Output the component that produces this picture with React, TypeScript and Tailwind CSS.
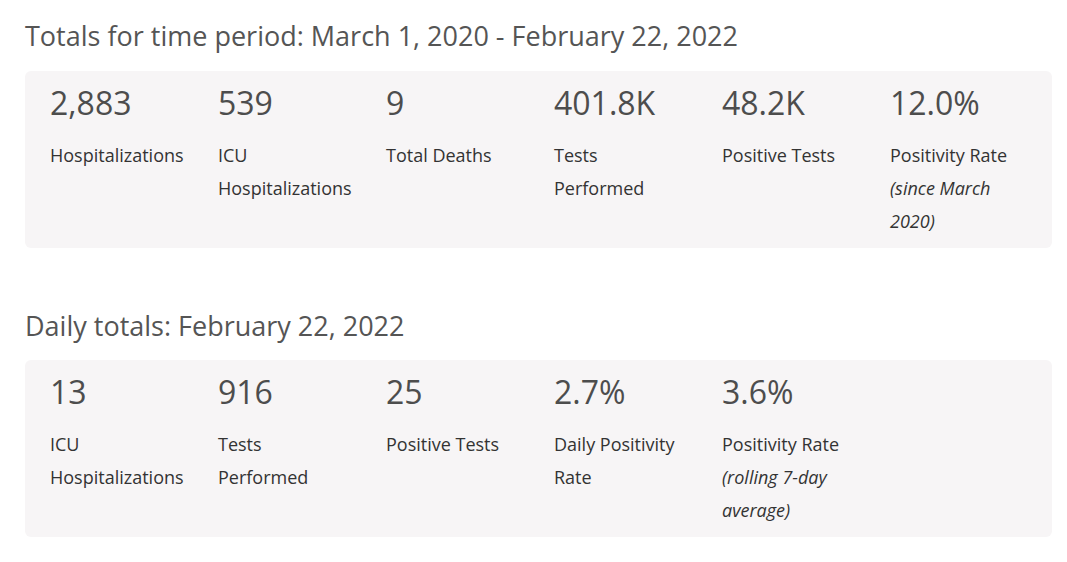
const totals = [
  { value: "2,883", label: "Hospitalizations" },
  { value: "539", label: "ICU Hospitalizations" },
  { value: "9", label: "Total Deaths" },
  { value: "401.8K", label: "Tests Performed" },
  { value: "48.2K", label: "Positive Tests" },
  { value: "12.0%", label: "Positivity Rate", note: "(since March 2020)" },
]

const daily = [
  { value: "13", label: "ICU Hospitalizations" },
  { value: "916", label: "Tests Performed" },
  { value: "25", label: "Positive Tests" },
  { value: "2.7%", label: "Daily Positivity Rate" },
  { value: "3.6%", label: "Positivity Rate", note: "(rolling 7-day average)" },
]

type Stat = { value: string; label: string; note?: string }

function StatCard({ stats }: { stats: Stat[] }) {
  return (
    <div className="bg-[#f7f5f6] rounded-md pl-[25px] pt-[12px] pb-[10px] flex">
      {stats.map((s) => (
        <div key={s.label + s.value} className="w-[168px] shrink-0 pr-[33px]">
          <div className="text-[32px] leading-[40px] text-[#4d4d4d]">{s.value}</div>
          <div className="mt-[16px] text-[18px] leading-[33px] text-[#333]">
            {s.label}
            {s.note && <i className="block">{s.note}</i>}
          </div>
        </div>
      ))}
    </div>
  )
}

export default function App() {
  return (
    <main
      className="min-h-screen bg-white pl-[25px] pr-[15px] pt-[18px]"
      style={{ fontFamily: '"Open Sans", sans-serif' }}
    >
      <h2 className="text-[27px] leading-[36px] text-[#555] mb-[17px]">
        Totals for time period: March 1, 2020 - February 22, 2022
      </h2>
      <StatCard stats={totals} />

      <h2 className="text-[27px] leading-[36px] text-[#555] mt-[60px] mb-[16px]">
        Daily totals: February 22, 2022
      </h2>
      <StatCard stats={daily} />
    </main>
  )
}
